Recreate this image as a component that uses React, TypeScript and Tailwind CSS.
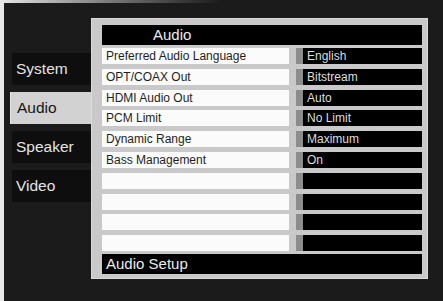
import React from "react";

const menuItems = [
  { label: "System", active: false },
  { label: "Audio", active: true },
  { label: "Speaker", active: false },
  { label: "Video", active: false },
];

const rows = [
  { label: "Preferred Audio Language", value: "English" },
  { label: "OPT/COAX Out", value: "Bitstream" },
  { label: "HDMI Audio Out", value: "Auto" },
  { label: "PCM Limit", value: "No Limit" },
  { label: "Dynamic Range", value: "Maximum" },
  { label: "Bass Management", value: "On" },
  { label: "", value: "" },
  { label: "", value: "" },
  { label: "", value: "" },
  { label: "", value: "" },
];

export default function App() {
  return (
    <div
      className="w-[443px] h-[301px] overflow-hidden bg-[#1b1b1b] flex flex-col"
      style={{ fontFamily: '"Liberation Sans", Arial, sans-serif' }}
    >
      {/* top edge */}
      <div className="h-[3px] shrink-0 bg-gradient-to-r from-[#e8e8e8] via-[#1b1b1b] to-[#1b1b1b]" />

      <div className="flex flex-1">
        {/* left edge */}
        <div className="w-[4px] bg-[#e8e8e8]" />

        {/* Menu */}
        <div className="w-[87px] pt-[50px] flex flex-col gap-[7px]">
          {menuItems.map((item) =>
            item.active ? (
              <div
                key={item.label}
                className="h-[32px] ml-[6px] pl-[6px] flex items-center bg-[#d2d2d2] border-l border-[#e6e6e6] text-[#151515] text-[15.5px]"
              >
                {item.label}
              </div>
            ) : (
              <div
                key={item.label}
                className="h-[32px] ml-[8px] pl-[4px] flex items-center bg-[#0e0e0e] text-[#e4e4e4] text-[15.5px]"
              >
                {item.label}
              </div>
            )
          )}
        </div>

        {/* Panel */}
        <div className="mt-[15px] w-[337px] h-[261px] bg-[#c9c9c9] border border-[#dadada] pt-[6px] pl-[10px] pr-[5px] pb-[4px] flex flex-col">
          <div className="h-[20px] bg-black text-[#ececec] text-[15px] pl-[51px] flex items-center">
            Audio
          </div>

          <div className="mt-[3px] flex flex-col gap-[4.8px]">
            {rows.map((row, i) => (
              <div key={i} className="h-[16px] flex">
                <div className="w-[187px] bg-[#fbfbfb] text-[#1e1e1e] text-[12px] pl-[4px] flex items-center">
                  {row.label}
                </div>
                <div className="w-[7px]" />
                <div className="w-[7px] bg-[#8c8c8c]" />
                <div className="w-[119px] bg-black text-[#dedede] text-[12px] pl-[4px] flex items-center">
                  {row.value}
                </div>
              </div>
            ))}
          </div>

          <div className="mt-[3px] h-[20px] bg-black text-[#ececec] text-[15px] pl-[4px] flex items-center">
            Audio Setup
          </div>
        </div>
      </div>
    </div>
  );
}
